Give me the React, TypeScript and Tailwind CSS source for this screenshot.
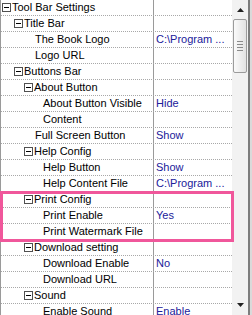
import React from "react";

type Row = { t: string; lv: number; node?: boolean; v?: string };

const rows: Row[] = [
  { t: "Tool Bar Settings", lv: 0, node: true },
  { t: "Title Bar", lv: 1, node: true },
  { t: "The Book Logo", lv: 2, v: "C:\\Program ..." },
  { t: "Logo URL", lv: 2 },
  { t: "Buttons Bar", lv: 1, node: true },
  { t: "About Button", lv: 2, node: true },
  { t: "About Button Visible", lv: 3, v: "Hide" },
  { t: "Content", lv: 3 },
  { t: "Full Screen Button", lv: 2, v: "Show" },
  { t: "Help Config", lv: 2, node: true },
  { t: "Help Button", lv: 3, v: "Show" },
  { t: "Help Content File", lv: 3, v: "C:\\Program ..." },
  { t: "Print Config", lv: 2, node: true },
  { t: "Print Enable", lv: 3, v: "Yes" },
  { t: "Print Watermark File", lv: 3 },
  { t: "Download setting", lv: 2, node: true },
  { t: "Download Enable", lv: 3, v: "No" },
  { t: "Download URL", lv: 3 },
  { t: "Sound", lv: 2, node: true },
  { t: "Enable Sound", lv: 3, v: "Enable" },
];

// indent of the name cell, by level
const nodePad: Record<number, string> = { 0: "pl-[1px]", 1: "pl-[13px]", 2: "pl-[23px]" };
const leafPad: Record<number, string> = { 2: "pl-[34px]", 3: "pl-[42px]" };

function MinusBox() {
  return (
    <span className="relative mr-[1px] inline-block h-[9px] w-[9px] shrink-0 border border-[#505050] bg-white">
      <span className="absolute left-[1px] top-[3px] h-[1px] w-[5px] bg-black" />
    </span>
  );
}

function Scrollbar() {
  return (
    <div className="relative flex h-full w-[16px] shrink-0 flex-col items-center bg-[#f2f2f2]">
      {/* up arrow */}
      <svg width="7" height="4" className="mt-[8px]" viewBox="0 0 7 4">
        <path d="M3.5 0 L7 4 L0 4 Z" fill="#222" />
      </svg>
      {/* thumb */}
      <div className="mt-[7px] flex h-[54px] w-[14px] flex-col items-center justify-center gap-[2px] rounded-[2px] border border-[#9b9b9b] bg-gradient-to-r from-[#fafafa] to-[#e2e2e2]">
        <span className="h-[1px] w-[6px] bg-[#8a8a8a]" />
        <span className="h-[1px] w-[6px] bg-[#8a8a8a]" />
        <span className="h-[1px] w-[6px] bg-[#8a8a8a]" />
        <span className="h-[1px] w-[6px] bg-[#8a8a8a]" />
      </div>
      {/* down arrow */}
      <svg width="7" height="4" className="absolute left-[5px] top-[303px]" viewBox="0 0 7 4">
        <path d="M0 0 L7 0 L3.5 4 Z" fill="#222" />
      </svg>
    </div>
  );
}

export default function App() {
  return (
    <div
      className="relative flex h-[315px] w-[252px] overflow-hidden bg-white text-[11px] text-black"
      style={{ fontFamily: '"Liberation Sans", Arial, sans-serif' }}
    >
      <div className="w-[232px] shrink-0 border-l border-[#9a9a9a]">
        {rows.map((r, i) => (
          <div key={i} className="flex h-[16px] border-b border-dotted border-[#a8a8a8]">
            <div
              className={`flex w-[153px] shrink-0 items-center overflow-hidden whitespace-nowrap border-r border-[#9a9a9a] leading-[15px] ${
                r.node ? nodePad[r.lv] : leafPad[r.lv]
              }`}
            >
              {r.node && <MinusBox />}
              <span>{r.t}</span>
            </div>
            <div className="flex-1 overflow-hidden whitespace-nowrap pl-[2px] leading-[15px] text-[#20209a]">
              {r.v ?? ""}
            </div>
          </div>
        ))}
      </div>

      <Scrollbar />
      <div className="h-full w-[2px] shrink-0 bg-[#7d7d7d]" />
      <div className="h-full w-[2px] shrink-0 bg-[#dadada]" />

      {/* highlight annotation */}
      <div className="pointer-events-none absolute left-0 top-[191px] h-[51px] w-[234px] border-[3px] border-[#f0579b]" />
    </div>
  );
}
